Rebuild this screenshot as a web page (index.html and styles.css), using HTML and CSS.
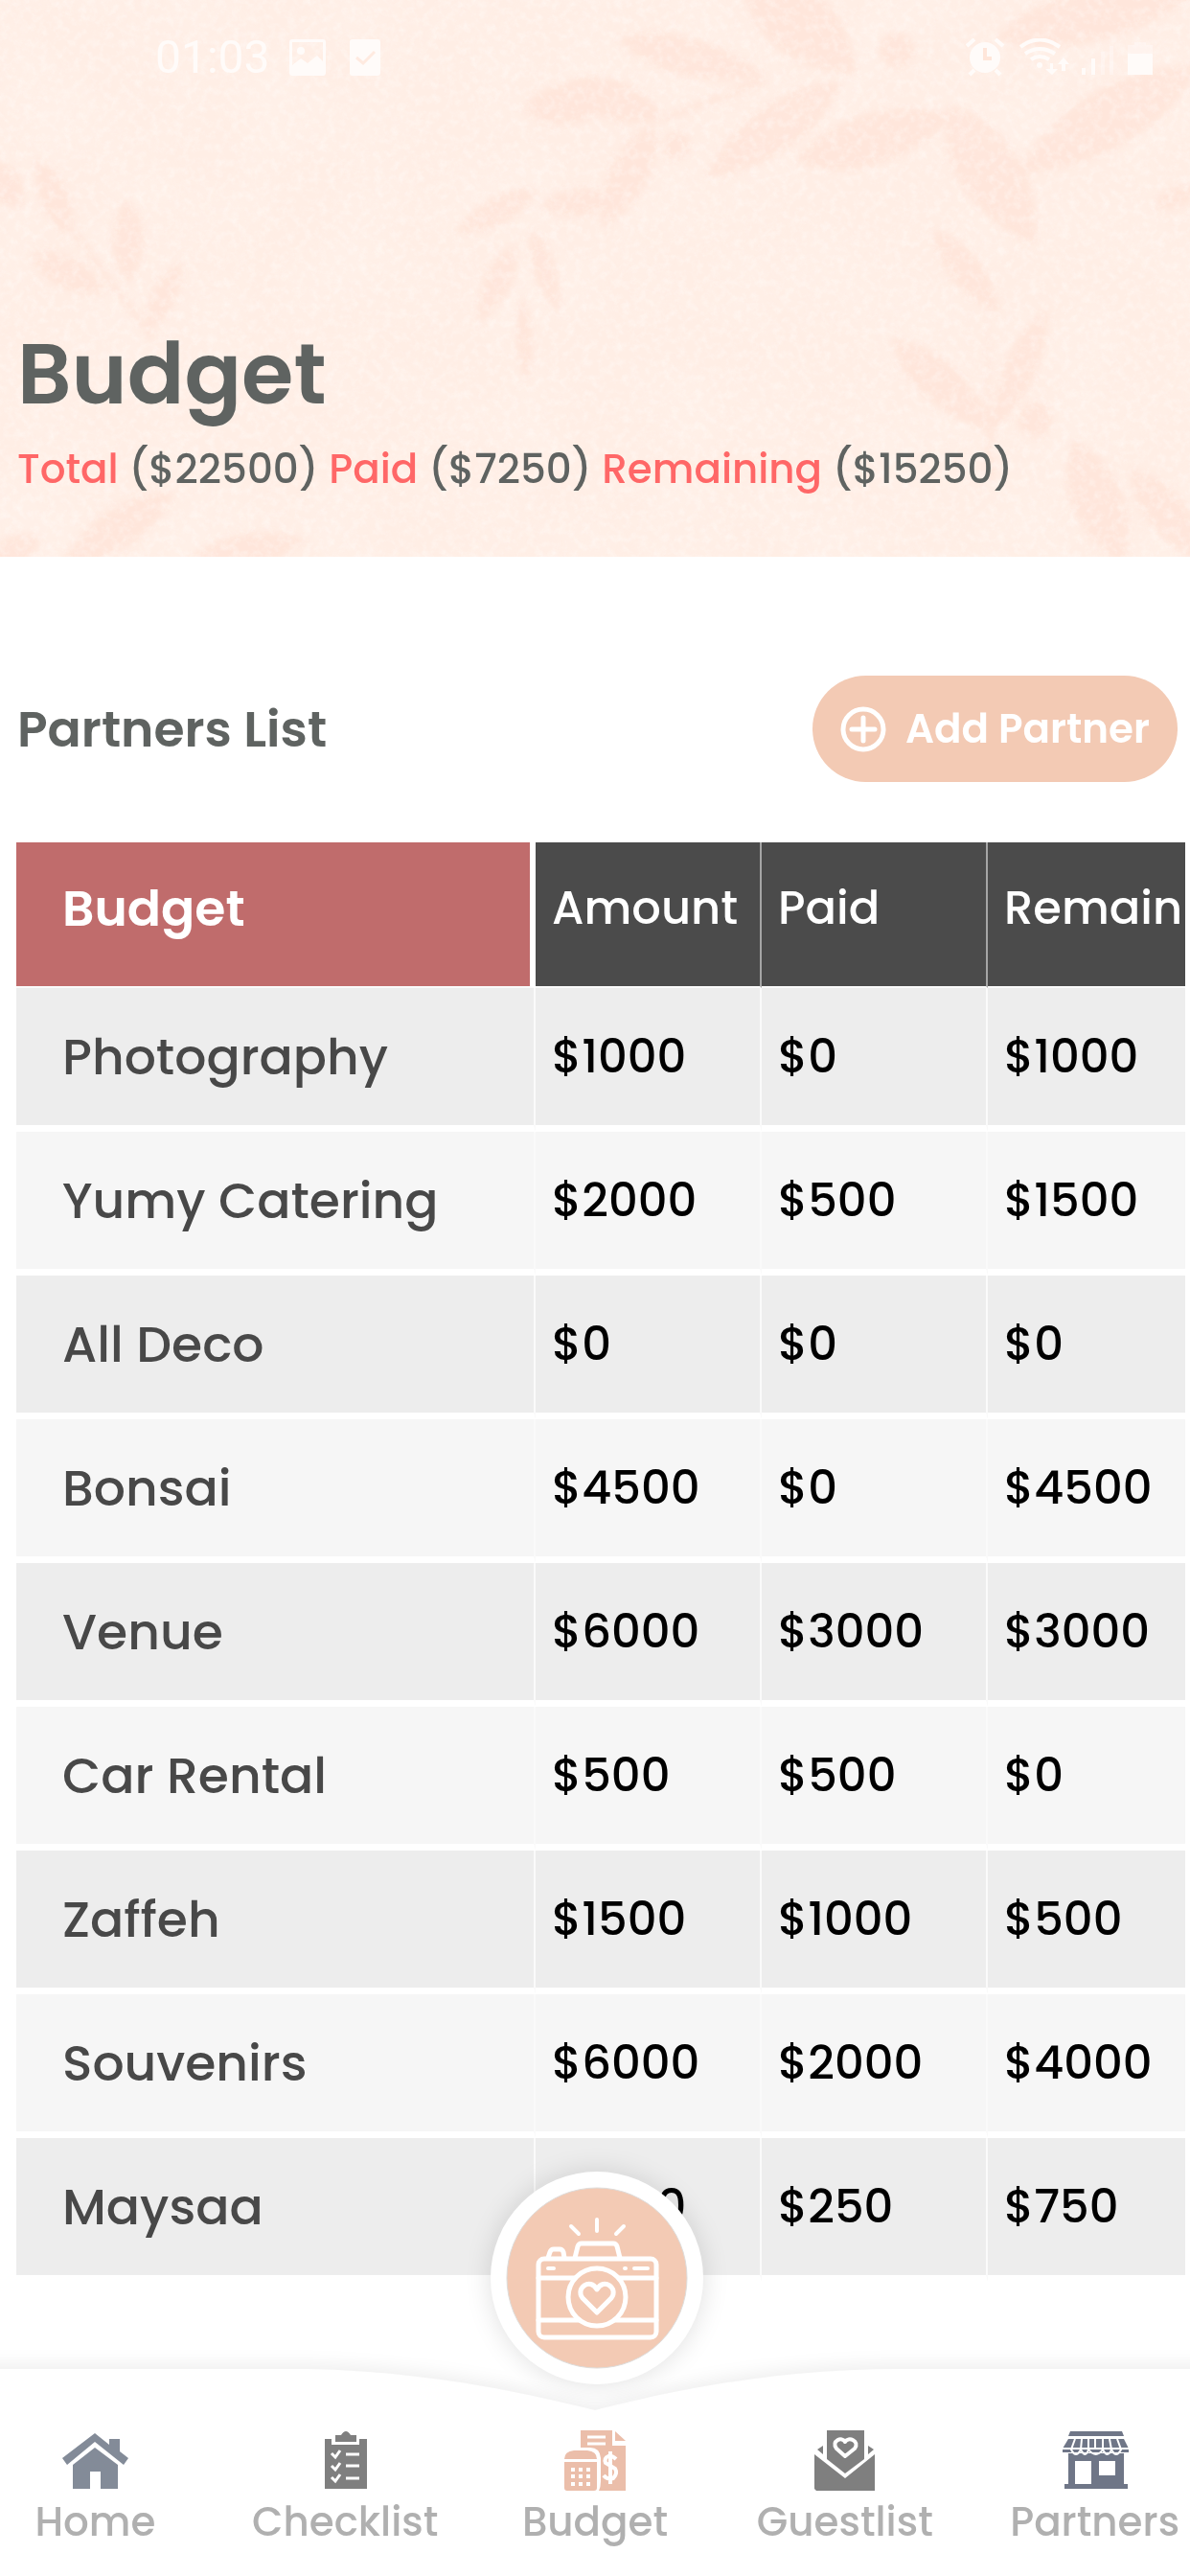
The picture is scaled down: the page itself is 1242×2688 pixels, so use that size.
FILE: index.html
```html
<!DOCTYPE html>
<html lang="en">
<head>
<meta charset="utf-8">
<meta name="viewport" content="width=device-width, initial-scale=1">
<title>Budget</title>
<link rel="stylesheet" href="styles.css">
</head>
<body>
<header class="hero">
  <svg class="hero-art" viewBox="0 0 1242 581" preserveAspectRatio="xMidYMid slice" aria-hidden="true">
    <defs>
      <path id="leaf" d="M0 0C25-28 70-26 100 0C70 26 25 28 0 0Z"/>
      <filter id="soft" x="-5%" y="-5%" width="110%" height="110%"><feGaussianBlur stdDeviation="3"/></filter>
      <filter id="paper" x="0" y="0" width="100%" height="100%">
        <feTurbulence type="fractalNoise" baseFrequency="0.12" numOctaves="4" seed="7"/>
        <feColorMatrix values="0 0 0 0 1  0 0 0 0 0.98  0 0 0 0 0.96  2 0 0 0 -0.8"/>
      </filter>
      <filter id="blotch" x="0" y="0" width="100%" height="100%">
        <feTurbulence type="fractalNoise" baseFrequency="0.012" numOctaves="4" seed="3"/>
        <feColorMatrix values="0 0 0 0 1  0 0 0 0 0.89  0 0 0 0 0.83  2.4 0 0 0 -0.9"/>
      </filter>
    </defs>
    <rect width="1242" height="581" fill="#ffeee5"/>
    <rect width="1242" height="581" filter="url(#blotch)" opacity=".5"/>
    <g fill="#ffe2d5" opacity=".65" filter="url(#soft)">
      <use href="#leaf" transform="translate(645 41) rotate(14) scale(1.56 1)"/>
      <use href="#leaf" transform="translate(775 -30) rotate(42) scale(1.6 1.7)"/>
      <use href="#leaf" transform="translate(878 86) rotate(145) scale(1.72 1.2)"/>
      <use href="#leaf" transform="translate(831 168) rotate(-16) scale(1.7 1.3)"/>
      <use href="#leaf" transform="translate(1040 40) rotate(-14) scale(2.2 1.4)"/>
      <use href="#leaf" transform="translate(1250 70) rotate(150) scale(2.2 1.5)"/>
      <use href="#leaf" transform="translate(590 86) rotate(20) scale(1.1 1)"/>
      <use href="#leaf" transform="translate(682 130) rotate(116) scale(1.2 1)"/>
      <use href="#leaf" transform="translate(990 110) rotate(58) scale(1.7 1.6)"/>
      <use href="#leaf" transform="translate(975 240) rotate(52) scale(1.1 .8)"/>
      <use href="#leaf" transform="translate(930 353) rotate(42) scale(1.48 1)"/>
      <use href="#leaf" transform="translate(1092 323) rotate(114) scale(1.4 .8)"/>
      <use href="#leaf" transform="translate(1120 460) rotate(68) scale(1.4 1.3)"/>
      <use href="#leaf" transform="translate(1180 490) rotate(50) scale(1.3 1)"/>
      <use href="#leaf" transform="translate(1250 198) rotate(160) scale(.5 .5)"/>
      <circle cx="1080" cy="438" r="18"/>
      <circle cx="936" cy="52" r="18"/>
      <circle cx="706" cy="152" r="14"/>
      <path d="M1030 320L1038 500L1030 500Z M795 80L700 118L690 128L800 86Z"/>
      <use href="#leaf" transform="translate(133 208) rotate(90) scale(.88 .8)"/>
      <use href="#leaf" transform="translate(32 265) rotate(27) scale(.9 .8)"/>
      <use href="#leaf" transform="translate(40 165) rotate(68) scale(.9 .7)"/>
      <use href="#leaf" transform="translate(-15 170) rotate(50) scale(.6 .9)"/>
      <use href="#leaf" transform="translate(188 275) rotate(116) scale(.8 .6)"/>
      <use href="#leaf" transform="translate(545 114) rotate(-6) scale(1 1)"/>
      <use href="#leaf" transform="translate(560 198) rotate(152) scale(.95 .7)"/>
      <use href="#leaf" transform="translate(565 215) rotate(-6) scale(.8 .7)"/>
      <use href="#leaf" transform="translate(538 255) rotate(115) scale(.9 .7)"/>
      <use href="#leaf" transform="translate(555 240) rotate(72) scale(.9 .6)"/>
      <use href="#leaf" transform="translate(545 310) rotate(87) scale(.9 .4)"/>
      <use href="#leaf" transform="translate(180 515) rotate(147) scale(1.4 1)"/>
      <use href="#leaf" transform="translate(190 590) rotate(-12) scale(1.3 .9)"/>
      <use href="#leaf" transform="translate(-10 590) rotate(-30) scale(.6 .8)"/>
      <path d="M80 240L160 350L158 356L76 246Z"/>
    </g>
    <rect width="1242" height="581" filter="url(#paper)" opacity=".45"/>
  </svg>

  <div class="status">
    <span class="clock">01:03</span>
    <svg class="st-image" viewBox="0 0 38 38" aria-hidden="true"><path fill="currentColor" fill-rule="evenodd" d="M3 0H35Q38 0 38 3V35Q38 38 35 38H3Q0 38 0 35V3Q0 0 3 0ZM3 3V27L12 20L19 25L29 17L35 23V3Z"/><circle cx="12" cy="12" r="4" fill="currentColor"/></svg>
    <svg class="st-check" viewBox="0 0 32 38" aria-hidden="true"><path fill="currentColor" d="M3 0H29Q32 0 32 3V35Q32 38 29 38H3Q0 38 0 35V3Q0 0 3 0Z"/><path d="M7 19L14 25L26 13" fill="none" stroke="#ffeae0" stroke-width="3"/></svg>
    <svg class="st-system" viewBox="0 0 196 40" aria-hidden="true">
      <g fill="none" stroke="currentColor" stroke-width="4"><path d="M1 8L9 1M31 1L39 8M9 33L4 38M31 33L36 38"/><path d="M57 9Q77-6 98 9M62 16Q77 6 93 16M68 22Q77 16 87 22" /></g>
      <circle cx="20" cy="20" r="16" fill="currentColor"/><path d="M20 10V21H27" fill="none" stroke="#ffe6da" stroke-width="4"/>
      <circle cx="77" cy="28" r="3" fill="currentColor"/>
      <path fill="currentColor" d="M88 26H91V32H96L90 38L83 32H88ZM100 34V27H96L102 20L108 27H104V34ZM121 31H125V38H121ZM131 21H135V38H131ZM169 16H195V38H169Z"/>
      <path fill="currentColor" opacity=".4" d="M141 14H145V38H141ZM150 8H154V38H150ZM176 4H188V7H195V16H169V7H176Z"/>
    </svg>
  </div>
  <h1>Budget</h1>
  <p class="summary"><b>Total</b> ($22500) <b>Paid</b> ($7250) <b>Remaining</b> ($15250)</p>
</header>

<main>
  <div class="list-head">
    <h2>Partners List</h2>
    <button type="button" class="add">
      <svg viewBox="0 0 48 48" aria-hidden="true"><g fill="none" stroke="currentColor" stroke-width="5"><circle cx="24" cy="24" r="21"/><path d="M24 12V36M12 24H36" stroke-linecap="round"/></g></svg>
      Add Partner
    </button>
  </div>
  <div class="table-wrap">
    <table>
      <colgroup><col class="col-name"><col><col><col></colgroup>
      <thead><tr><th scope="col">Budget</th><th scope="col">Amount</th><th scope="col">Paid</th><th scope="col">Remaining</th></tr></thead>
      <tbody>
        <tr><th scope="row">Photography</th><td>$1000</td><td>$0</td><td>$1000</td></tr>
        <tr><th scope="row">Yumy Catering</th><td>$2000</td><td>$500</td><td>$1500</td></tr>
        <tr><th scope="row">All Deco</th><td>$0</td><td>$0</td><td>$0</td></tr>
        <tr><th scope="row">Bonsai</th><td>$4500</td><td>$0</td><td>$4500</td></tr>
        <tr><th scope="row">Venue</th><td>$6000</td><td>$3000</td><td>$3000</td></tr>
        <tr><th scope="row">Car Rental</th><td>$500</td><td>$500</td><td>$0</td></tr>
        <tr><th scope="row">Zaffeh</th><td>$1500</td><td>$1000</td><td>$500</td></tr>
        <tr><th scope="row">Souvenirs</th><td>$6000</td><td>$2000</td><td>$4000</td></tr>
        <tr><th scope="row">Maysaa</th><td>$1000</td><td>$250</td><td>$750</td></tr>
      </tbody>
    </table>
  </div>
</main>

<nav class="tabs" aria-label="Main">
  <svg class="tabs-shape" viewBox="0 0 1242 216" preserveAspectRatio="none" aria-hidden="true"><path fill="#fff" d="M-40 0H320C430 2 530 20 621 43C720 18 820 0 940 0H1282V216H-40Z"/></svg>
  <button type="button" class="camera" aria-label="Take photo">
    <svg viewBox="0 0 222 222" aria-hidden="true">
      <circle cx="111" cy="111" r="94" fill="#f3cab4" stroke="#dedcda" stroke-width="1"/>
      <g fill="none" stroke="#fff" stroke-width="5" stroke-linecap="round" stroke-linejoin="round">
        <rect x="50" y="91" width="123" height="82" rx="6"/>
        <path d="M50 111H88M134 111H173M50 155H93M129 155H173"/>
        <circle cx="111" cy="131" r="30"/>
        <path d="M88 90L91 78Q92 75 95 75H128Q131 75 132 78L135 90M60 90L62 84Q63 81 66 81H72Q75 81 76 84L77 90"/>
        <path stroke-width="4" d="M111 50V62M84 57L92 65M139 57L131 65M60 101H66M150 101H164M140 101H141"/>
        <path d="M111 147L96 132C88 122 104 110 111 123C118 110 134 122 126 132Z"/>
      </g>
    </svg>
  </button>
  <ul>
    <li><a href="#home"><svg viewBox="0 0 72 64" fill="#838b98" aria-hidden="true"><path d="M36 4L51 16V10H62V23L71 30L66 37L36 13L7 37L2 30Z"/><path d="M36 19L60 37V62H42V44H31V62H13V37Z"/></svg>Home</a></li>
    <li><a href="#checklist"><svg viewBox="0 0 72 64" fill="#7f7f7f" aria-hidden="true"><path d="M15 10H22V16H51V10H59V62H15Z"/><path d="M26 6H32Q37-2 42 6H48V13H26Z"/><path fill="none" stroke="#fff" stroke-width="3" d="M22 25L26 29L31 22M22 38L26 42L31 35M22 50L26 54L31 47M37 26H51M37 38H51M37 51H51"/></svg>Checklist</a></li>
    <li><a href="#budget" aria-current="page"><svg viewBox="0 0 72 64" fill="#ebbeaa" aria-hidden="true"><path d="M21 1H54V17H68V64H40Q42 60 42 54V30Q41 19 31 19H21Z"/><path d="M57 2L68 12H57Z"/><path d="M14 22H28Q38 23 38 31H4Q4 23 14 22ZM4 34H38V61Q38 64 35 64H7Q4 64 4 61Z"/><path fill="none" stroke="#fff" stroke-width="3" d="M28 8H47M28 15H47"/><path fill="none" stroke="#fff" stroke-width="4" stroke-dasharray="4 4" d="M11 42H31M11 49H31M11 57H31"/><path fill="none" stroke="#fff" stroke-width="4" d="M52 23V57M58 31Q54 27 50 28Q45 30 47 35L57 41Q60 46 55 51Q49 53 45 48"/></svg>Budget</a></li>
    <li><a href="#guestlist"><svg viewBox="0 0 72 64" fill="#7f7f7f" aria-hidden="true"><path d="M17 1H56V31L36 46L17 31Z"/><path d="M4 26L36 51L67 26V64H6L4 62ZM13 17V26L7 21ZM60 17V26L66 21Z"/><path fill="none" stroke="#fff" stroke-width="4" stroke-linejoin="round" d="M36 28L27 20C21 12 33 7 36 13C39 7 52 12 46 20Z"/></svg>Guestlist</a></li>
    <li><a href="#partners"><svg viewBox="0 0 72 64" fill="#6f7687" aria-hidden="true"><path d="M10 2H64L66 7H8Z"/><path d="M8 10H66L71 20V24H2V20Z"/><path fill-rule="evenodd" d="M8 25H66V57H70V62H4V57H8ZM15 33V57H32V33ZM40 33V48H57V33Z"/><path fill="none" stroke="#fff" stroke-width="2" d="M2 20H72M15 10L11 21Q16 31 21 21L22 10M21 21Q26 31 29 21V10M29 21Q37 31 44 21V10M44 21Q49 31 53 21L51 10M53 21Q58 31 63 21L59 10M36 10V21"/></svg>Partners</a></li>
  </ul>
</nav>
</body>
</html>
```
FILE: styles.css
```css
* { box-sizing: border-box; }

body {
  margin: 0;
  min-height: 100vh;
  display: flex;
  flex-direction: column;
  background: #fff;
  color: #5f6361;
  font-family: Poppins, Inter, "Noto Sans", sans-serif;
  font-weight: 500;
  overflow-x: hidden;
}

h1, h2, p, ul { margin: 0; padding: 0; }
button { font: inherit; border: 0; padding: 0; cursor: pointer; }
svg { display: block; }

.hero {
  position: relative;
  padding: 36px 18px 63px;
}
.hero-art {
  position: absolute;
  inset: 0;
  width: 100%;
  height: 100%;
  z-index: -1;
}

.status {
  display: flex;
  align-items: center;
  height: 48px;
  padding: 0 20px 0 144px;
  margin-bottom: 255px;
  color: #fffbf9;
}
.clock { font: 400 48px/48px Roboto, sans-serif; margin-right: 20px; }
.st-image { width: 38px; height: 38px; margin-right: 25px; }
.st-check { width: 32px; height: 38px; }
.st-system { width: 196px; height: 40px; margin-left: auto; }

h1 { font-size: 88px; line-height: 104px; font-weight: 600; }
.summary { margin-top: 19px; font-size: 42px; line-height: 56px; white-space: nowrap; }
.summary b { font-weight: 500; color: #ff6767; }

.list-head {
  display: flex;
  align-items: center;
  justify-content: space-between;
  padding: 124px 13px 63px 18px;
}
h2 { font-size: 52px; line-height: 64px; font-weight: 600; }
.add {
  display: flex;
  align-items: center;
  gap: 20px;
  height: 111px;
  padding: 0 29px;
  border-radius: 56px;
  background: #f3cab4;
  color: #fff;
  font-size: 42px;
  font-weight: 600;
}
.add svg { width: 48px; height: 48px; }

.table-wrap { margin: 0 5px 0 17px; overflow: hidden; }
table {
  width: 100%;
  min-width: 1250px;
  table-layout: fixed;
  border-collapse: separate;
  border-spacing: 0;
  font-size: 48px;
  line-height: 64px;
}
.col-name { width: 542px; }
th, td {
  height: 150px;
  padding: 0 0 0 17px;
  text-align: left;
  font-weight: 500;
  white-space: nowrap;
  border-right: 2px solid #fafafa;
  border-bottom: 7px solid #fff;
}
td { color: #000; }
tbody th { padding-left: 48px; color: #484848; font-size: 52px; }
tbody tr { background: #f6f6f6; }
tbody tr:nth-child(odd) { background: #ededed; }
thead th {
  height: 152px;
  padding-bottom: 12px;
  background: #4b4b4b;
  color: #fff;
  border-right-color: #a5a5a5;
  border-bottom: 2px solid #fafafa;
}
thead th:first-child {
  padding-left: 48px;
  background: #c06c6c;
  border-right: 6px solid #fff;
  font-size: 52px;
  font-weight: 600;
}

.tabs { position: relative; margin-top: auto; padding: 63px 0 32px; }
.tabs-shape {
  position: absolute;
  inset: 0;
  width: 100%;
  height: 100%;
  overflow: visible;
  filter: drop-shadow(0 -6px 8px rgba(0, 0, 0, .06));
}
.tabs ul {
  position: relative;
  display: grid;
  grid-template-columns: repeat(5, 21%);
  justify-content: center;
  list-style: none;
}
.tabs a {
  display: flex;
  flex-direction: column;
  align-items: center;
  gap: 9px;
  color: #b0b0b0;
  font-size: 42px;
  line-height: 48px;
  text-decoration: none;
}
.tabs a svg { width: 72px; height: 64px; }

.camera {
  position: absolute;
  left: 50%;
  top: -206px;
  width: 222px;
  height: 222px;
  margin-left: -109px;
  border-radius: 50%;
  background: #fff;
  box-shadow: 0 0 28px rgba(0, 0, 0, .13);
}
```
